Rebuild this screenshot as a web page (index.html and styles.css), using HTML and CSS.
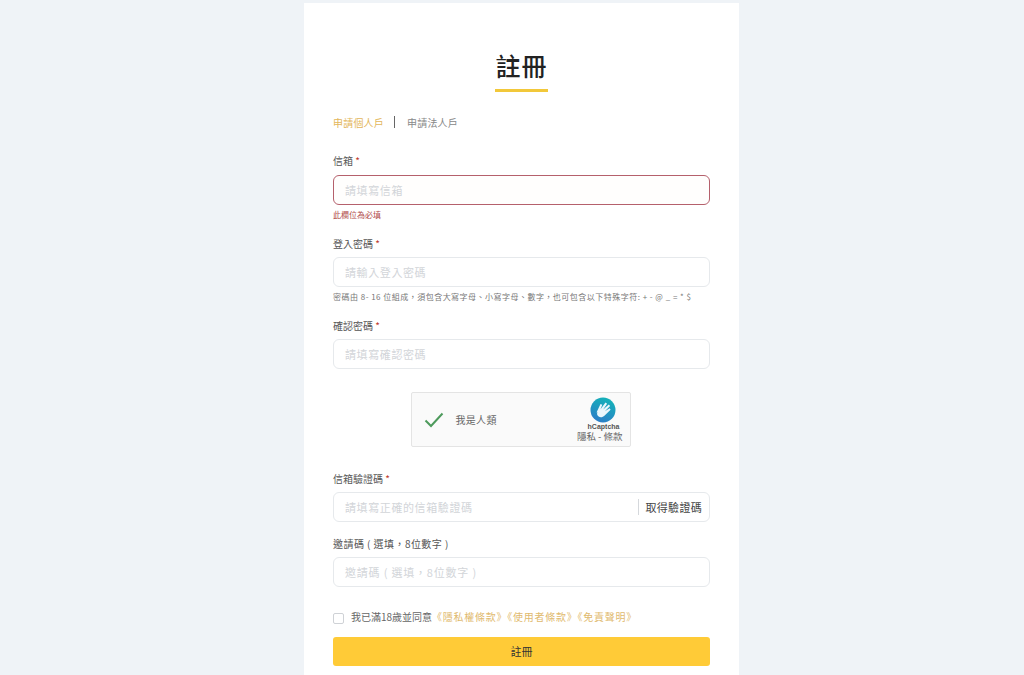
FILE: index.html
```html
<!DOCTYPE html>
<html lang="zh-Hant">
<head>
<meta charset="utf-8">
<title>註冊</title>
<link rel="stylesheet" href="styles.css">
</head>
<body>
<main class="card">
  <div class="title-wrap"><h1 class="title">註冊</h1></div>
  <div class="tabs">
    <span class="tab tab-active">申請個人戶</span>
    <span class="tab-sep"></span>
    <span class="tab">申請法人戶</span>
  </div>
  <form class="form">
    <div class="field f-email">
      <label class="label">信箱 <em class="req">*</em></label>
      <div class="input input-error"><span class="ph">請填寫信箱</span></div>
      <div class="error">此欄位為必填</div>
    </div>
    <div class="field f-pass">
      <label class="label">登入密碼 <em class="req">*</em></label>
      <div class="input"><span class="ph">請輸入登入密碼</span></div>
      <div class="hint">密碼由 8- 16 位組成，須包含大寫字母、小寫字母、數字，也可包含以下特殊字符: + - @ _ = * $</div>
    </div>
    <div class="field f-confirm">
      <label class="label">確認密碼 <em class="req">*</em></label>
      <div class="input"><span class="ph">請填寫確認密碼</span></div>
    </div>
    <div class="captcha">
      <svg class="check" viewBox="0 0 20 16" width="20" height="16"><path d="M1.5 8.5 7 14 18.5 1.5" fill="none" stroke="#4d9a5c" stroke-width="2"/></svg>
      <span class="captcha-text">我是人類</span>
      <div class="captcha-brand">
        <svg class="hc-logo" viewBox="0 0 26 26" width="26" height="26">
          <defs>
            <linearGradient id="hcg" x1="0.7" y1="0" x2="0.3" y2="1">
              <stop offset="0" stop-color="#14b3b8"/>
              <stop offset="1" stop-color="#2c7cc8"/>
            </linearGradient>
          </defs>
          <circle cx="13" cy="13" r="12.5" fill="url(#hcg)"/>
          <path d="M6.5 15.5 10.5 7l1.8.8-1.8 4.4 5-6.6 1.6 1.2-3.9 5.6 5.6-4.8 1.3 1.4-5.2 5.3 4.8-3 .9 1.5-5.9 5.7c-2.3 2.2-4.6 2.3-6.4.7-1.4-1.2-1.5-2.5-.8-4z" fill="#eaf6fb"/>
        </svg>
        <span class="hc-name">hCaptcha</span>
        <span class="hc-links">隱私 - 條款</span>
      </div>
    </div>
    <div class="field f-code">
      <label class="label">信箱驗證碼 <em class="req">*</em></label>
      <div class="input input-code"><span class="ph">請填寫正確的信箱驗證碼</span><span class="get-code">取得驗證碼</span></div>
    </div>
    <div class="field f-invite">
      <label class="label">邀請碼 ( 選填，8位數字 )</label>
      <div class="input"><span class="ph">邀請碼 ( 選填，8位數字 )</span></div>
    </div>
    <div class="agree">
      <span class="box"></span>
      <span class="agree-text">我已滿18歲並同意<a class="link">《隱私權條款》《使用者條款》《免責聲明》</a></span>
    </div>
    <button class="submit" type="button">註冊</button>
  </form>
</main>
</body>
</html>
```
FILE: styles.css
```css
* { box-sizing: border-box; }
html, body { height: 100%; }
body {
  margin: 0;
  background: #eff3f7;
  font-family: "Noto Sans CJK TC", "Noto Sans", sans-serif;
  color: #333;
  overflow: hidden;
  height: 675px;
}
.card {
  width: 435px;
  margin: 3px 0 0 304px;
  background: #fff;
  padding: 42px 29px 40px;
  height: 720px;
}
.title-wrap { display: flex; justify-content: center; }
.title {
  margin: 0;
  width: 53px;
  height: 47px;
  border-bottom: 3px solid #f2c83a;
  font-size: 25px;
  line-height: 40px;
  font-weight: 500;
  color: #222;
  text-align: center;
  letter-spacing: 1px;
  white-space: nowrap;
}
.tabs {
  display: flex;
  align-items: center;
  margin-top: 22px;
  height: 16px;
  font-size: 10px;
  letter-spacing: 0.2px;
  color: #888;
}
.tab-active { color: #e3b65a; }
.tab-sep { width: 1px; height: 12px; background: #666; margin: 0 12px 0 10px; }
.form { display: flex; flex-direction: column; }
.field { display: flex; flex-direction: column; }
.label { font-size: 10px; line-height: 14px; height: 14px; color: #555; margin-bottom: 6px; }
.req { font-style: normal; color: #c0392b; }
.input {
  height: 30px;
  border: 1px solid #e6e9ec;
  border-radius: 6px;
  display: flex;
  align-items: center;
  padding: 0 11px;
  background: #fff;
}
.input-error { border-color: #b5606c; background: #fffefd; }
.ph { font-size: 11px; letter-spacing: 0.6px; color: #d2d5d9; flex: 1; }
.error { font-size: 8px; line-height: 12px; margin-top: 4px; color: #b04a4a; }
.hint { font-size: 8px; letter-spacing: 0.48px; line-height: 12px; margin-top: 4px; color: #777; white-space: nowrap; }
.f-email { margin-top: 24px; }
.f-email .label { margin-bottom: 7px; }
.f-pass { margin-top: 16px; }
.f-confirm { margin-top: 16px; }
.captcha {
  align-self: center;
  margin: 23px 2px 0 0;
  width: 220px;
  height: 55px;
  border: 1px solid #e4e4e4;
  border-radius: 2px;
  background: #fafafa;
  display: flex;
  align-items: center;
  padding: 0 3px 0 12px;
}
.check { margin-right: 12px; }
.captcha-text { font-size: 10px; letter-spacing: 0.3px; color: #666; flex: 1; }
.captcha-brand { display: flex; flex-direction: column; align-items: flex-end; padding-right: 4px; margin-top: -1px; }
.hc-logo { margin: 0 7px 0 0; }
.hc-name { font-family: "Liberation Sans", sans-serif; font-size: 7px; line-height: 8px; font-weight: 700; color: #555; margin: 0 3px 0 0; }
.hc-links { font-size: 9.5px; line-height: 10px; color: #666; }
.f-code { margin-top: 25px; }
.input-code { padding-right: 7px; }
.get-code {
  border-left: 1px solid #d5d8dc;
  padding-left: 7px;
  font-size: 11px;
  line-height: 16px;
  color: #444;
  letter-spacing: 0.3px;
}
.f-invite { margin-top: 15px; }
.f-invite .label { letter-spacing: 0.45px; }
.f-invite .ph { letter-spacing: 0.8px; }
.agree { display: flex; align-items: center; margin-top: 24px; height: 14px; }
.box { width: 11px; height: 11px; border: 1px solid #cfd2d6; border-radius: 2px; margin-right: 7px; background: #fff; }
.agree-text { font-size: 10px; line-height: 12px; padding-bottom: 2px; color: #666; }
.link { color: #dfba6e; letter-spacing: 0.75px; }
.submit {
  margin-top: 12px;
  height: 29px;
  border: 0;
  border-radius: 3px;
  background: #ffcb37;
  color: #333;
  font-family: inherit;
  font-size: 11px;
  padding: 0 0 2px;
  width: 100%;
}
```
